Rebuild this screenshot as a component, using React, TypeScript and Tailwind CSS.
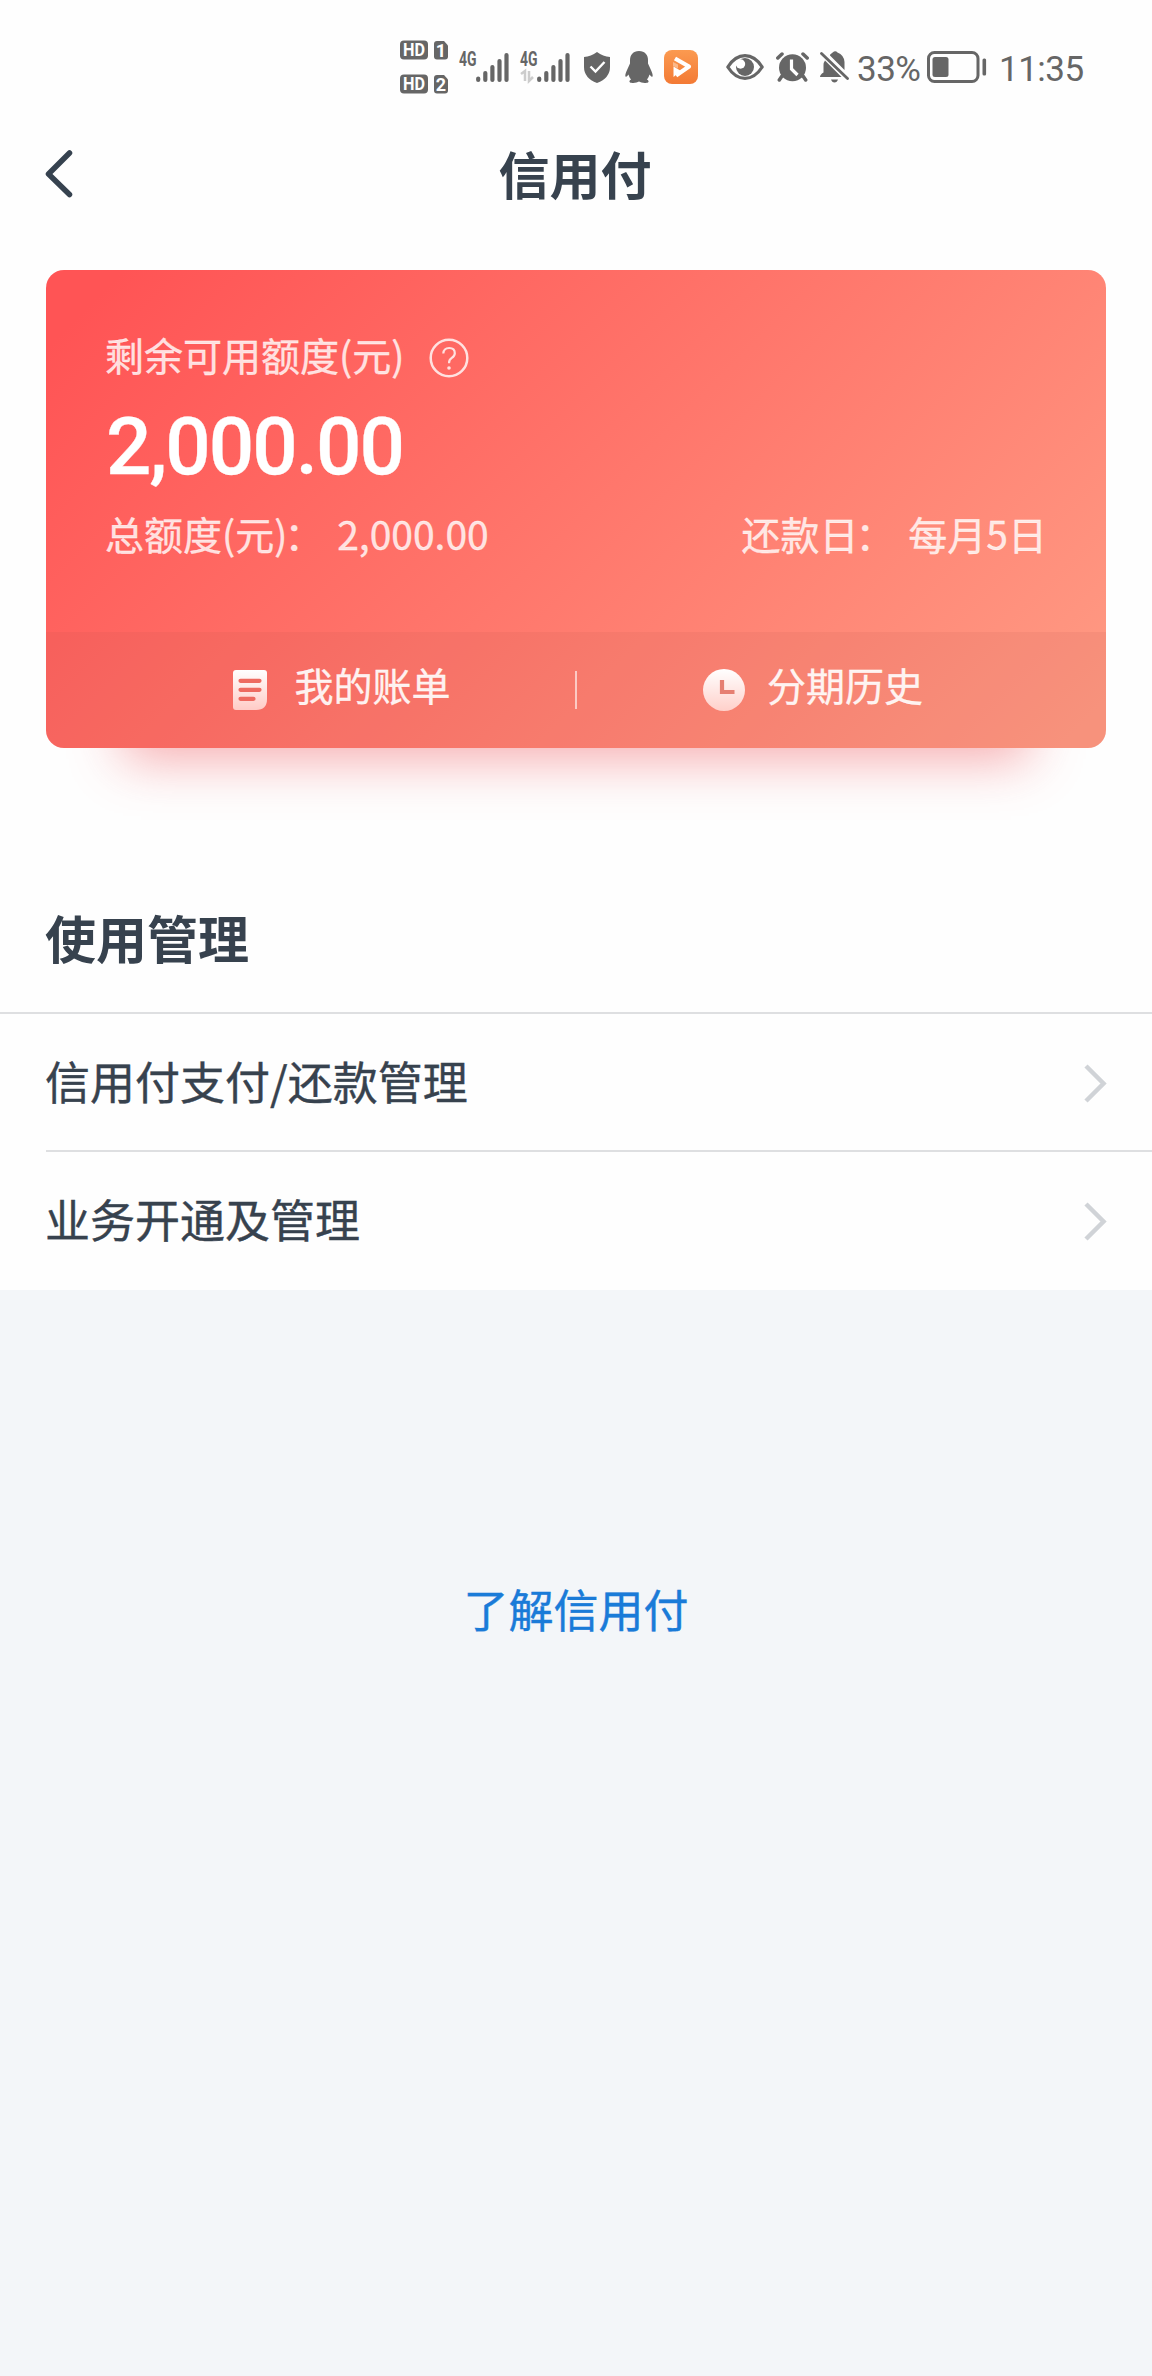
import type { ReactNode } from 'react';

function HdBadge({ sim }: { sim: number }) {
  return (
    <svg className="overflow-visible font-[Roboto]" width="48" height="20" viewBox="0 0 48 20">
      <rect x="0" y="0.5" width="28" height="19" rx="4" fill="#666" />
      <path d="M37 1h7l4 4.500v11q0 3-3 3h-8q-3 0-3-3V4q0-3 3-3z" fill="#666" />
      <text x="14" y="16" textAnchor="middle" textLength="22" lengthAdjust="spacingAndGlyphs" fontSize="18" fontWeight="700" fill="#fff">HD</text>
      <text x="41" y="16.500" textAnchor="middle" fontSize="18" fontWeight="700" fill="#fff">{sim}</text>
    </svg>
  );
}

function Signal({ data = false }: { data?: boolean }) {
  return (
    <svg className="overflow-visible font-[Roboto]" width="50" height="34" viewBox="0 0 50 34">
      <text x="0" y="15.500" textLength="17.500" lengthAdjust="spacingAndGlyphs" fontSize="20" fontWeight="700" fill="#666">4G</text>
      <path d="M19.200 28.500v1.500M26.300 23v7M33.400 17v13M40.500 11v19M47.500 5v25" stroke="#666" strokeWidth="4.200" strokeLinecap="round" />
      {data && <path d="M1 24l4-3v10M9 21v10l4-4" fill="none" stroke="#ccc" strokeWidth="2.500" />}
    </svg>
  );
}

function StatusBar() {
  return (
    <div className="flex h-[134px] items-center pl-[400px] text-[#666]">
      <div className="flex flex-col gap-3.5">
        <HdBadge sim={1} />
        <HdBadge sim={2} />
      </div>
      <Gap className="w-[11px]" />
      <Signal />
      <Gap className="w-[11px]" />
      <Signal data />
      <Gap className="w-3.5" />
      <svg width="26" height="31" viewBox="0 0 26 31">
        <path d="M13 0q6 4.500 13 5v10q0 11-13 16Q0 26 0 15V5q7-.5 13-5z" fill="#666" />
        <path d="M6.500 14.500l5 5 9-9.500" fill="none" stroke="#fff" strokeWidth="2.400" />
      </svg>
      <Gap className="w-[15px]" />
      <svg width="28" height="32" viewBox="0 0 28 32" fill="#666">
        <path d="M14 0C8 0 5 4 5 9v3.500L2.500 18C.5 22 0 24.500.5 25.500c.8.800 2-.5 3-2 .4 1.800 1.400 3.600 2.700 5-2 .7-2.700 3 0 3.300 3 .5 6-.2 7.800-1.200 1.800 1 4.800 1.700 7.800 1.200 2.700-.3 2-2.600 0-3.300 1.300-1.400 2.300-3.200 2.700-5 1 1.500 2.200 2.800 3 2 .5-1 0-3.500-2-7.500L23 12.500V9c0-5-3-9-9-9z" />
      </svg>
      <Gap className="w-[11px]" />
      <svg width="34" height="34" viewBox="0 0 34 34">
        <defs>
          <linearGradient id="player" x1="0" y1="0" x2="0" y2="1">
            <stop stopColor="#fb9a50" />
            <stop offset="1" stopColor="#f37a35" />
          </linearGradient>
        </defs>
        <rect width="34" height="34" rx="8" fill="url(#player)" />
        <path d="M11 8.500l14 8-13 9" fill="none" stroke="#fff" strokeWidth="4.200" strokeLinejoin="round" />
        <path d="M9 12l5 2.500v4L9 16z" fill="#fbb98a" />
        <path d="M9.500 27V16.500l7.500 4.500z" fill="#fff" />
      </svg>
      <Gap className="w-7" />
      <svg width="38" height="26" viewBox="0 0 38 26">
        <path d="M1.800 13Q9 1.700 19 1.700T36.200 13Q29 24.300 19 24.300T1.800 13z" fill="none" stroke="#666" strokeWidth="3.200" strokeLinejoin="round" />
        <circle cx="19" cy="13" r="9" fill="#666" />
        <circle cx="14.500" cy="10" r="4.700" fill="#fff" />
      </svg>
      <Gap className="w-3" />
      <svg width="33" height="30" viewBox="0 0 33 30" fill="none" stroke="#666" strokeWidth="3.500" strokeLinecap="round">
        <path d="M1.800 6L6 2M31.200 6L27 2M6 24l-2.700 4M27 24l2.700 4" />
        <circle cx="16.500" cy="15.800" r="13.500" fill="#666" stroke="none" />
        <path d="M15.500 7.500v9.500l6 6" stroke="#fff" strokeWidth="3.200" strokeLinecap="butt" />
      </svg>
      <Gap className="w-[11px]" />
      <svg width="29" height="32" viewBox="0 0 29 32">
        <path d="M10 3.800Q12 2 14 .5q2-.8 3.500 1Q24 4 24.500 11v8L10 4.500zM5 9.500L21.500 26H0q0-2.500 3.500-4.500V14q0-2.500 1.500-4.500zM11 28.500h7q-1 3-3.500 3t-3.500-3z" fill="#666" />
        <path d="M1.500 2.500l26 25" stroke="#666" strokeWidth="2.800" strokeLinecap="round" />
      </svg>
      <Gap className="w-2" />
      <span className="mt-1 w-[63px] whitespace-nowrap font-[Roboto] text-[35px] leading-none tracking-[-0.5px]">33%</span>
      <Gap className="w-[7px]" />
      <svg width="60" height="32" viewBox="0 0 60 32">
        <rect x="1.500" y="1.500" width="49.500" height="29" rx="6" fill="none" stroke="#666" strokeWidth="3" />
        <rect x="5.500" y="6" width="16" height="20" rx="2.500" fill="#666" />
        <rect x="55.500" y="7.500" width="3.600" height="17" rx="1.500" fill="#666" />
      </svg>
      <Gap className="w-3" />
      <span className="mt-1 whitespace-nowrap font-[Roboto] text-[35px] leading-none tracking-[-0.5px]">11:35</span>
    </div>
  );
}

function Gap({ className }: { className: string }) {
  return <span className={`shrink-0 ${className}`} />;
}

function NavBar() {
  return (
    <header className="grid h-[136px] grid-cols-3 px-[45px] pt-[11px]">
      <svg className="mt-[5px]" width="28" height="48" viewBox="0 0 28 48">
        <path d="M24.500 3L3.500 24l21 20.500" fill="none" stroke="#36424f" strokeWidth="5.500" strokeLinecap="round" strokeLinejoin="round" />
      </svg>
      <h1 className="-ml-0.5 text-center text-[51px] font-bold leading-[56px]">信用付</h1>
    </header>
  );
}

function CardAction({ icon, label, className }: { icon: ReactNode; label: string; className: string }) {
  return (
    <div className={`flex items-center justify-center ${className}`}>
      {icon}
      <span className="-mt-3">{label}</span>
    </div>
  );
}

function LabeledValue({ label, value }: { label: string; value: string }) {
  return (
    <span>
      {label}
      <span className="-ml-[3px] mr-[5px]">：</span> {value}
    </span>
  );
}

function CreditCard() {
  return (
    <section className="mx-[46px] flex h-[478px] flex-col overflow-hidden rounded-[18px] bg-[linear-gradient(135deg,#ff5455_5%,#ff9a83_97%)] text-[39px] leading-[56px] text-white/80 shadow-[0_88px_50px_-77px_rgba(238,80,85,0.48)] [-webkit-text-stroke:0.3px]">
      <div className="h-[362px] px-[59px] pt-[56px]">
        <div className="flex items-center">
          <span>剩余可用额度(元)</span>
          <svg className="ml-[25px] mt-2" width="40" height="40" viewBox="0 0 40 40" fill="none" stroke="#fff" strokeOpacity="0.8" strokeWidth="2.500">
            <circle cx="20" cy="20" r="18.300" />
            <path d="M14.300 15.500q.4-5.500 5.900-5.500 5.600 0 5.600 5.200 0 2.700-3 4.700-2.800 1.800-2.800 5.300" strokeWidth="2.200" />
            <circle cx="20" cy="30" r="1.800" fill="#fff" fillOpacity="0.8" stroke="none" />
          </svg>
        </div>
        <div className="ml-px mt-[23px] h-[84px] whitespace-nowrap font-[Roboto] text-[80px] font-medium leading-[84px] tracking-[-2px] text-white">2,000.00</div>
        <div className="mt-4 flex justify-between">
          <LabeledValue label="总额度(元)" value="2,000.00" />
          <LabeledValue label="还款日" value="每月5日" />
        </div>
      </div>
      <div className="grid flex-1 grid-cols-[1fr_2px_1fr] items-center bg-[#b05040]/10 text-white/90">
        <CardAction
          className="pl-[63px]"
          label="我的账单"
          icon={
            <svg className="mr-[27px]" width="34" height="40" viewBox="0 0 34 40">
              <defs>
                <linearGradient id="bill" x1="0" y1="0" x2="0" y2="1">
                  <stop stopColor="#fff" />
                  <stop offset="1" stopColor="#ffcbc6" />
                </linearGradient>
              </defs>
              <path d="M3 0h28q3 0 3 3v26q0 11-11 11H3q-3 0-3-3V3q0-3 3-3z" fill="url(#bill)" />
              <path d="M7.500 10.800h19M7.500 19.800h19M7.500 28.800h13" stroke="#ee6a60" strokeWidth="4.200" strokeLinecap="round" />
            </svg>
          }
        />
        <span className="h-[38px] bg-white/60" />
        <CardAction
          className="pr-[57px]"
          label="分期历史"
          icon={
            <svg className="mr-[22px]" width="42" height="42" viewBox="0 0 42 42">
              <circle cx="21" cy="21" r="21" fill="url(#clock)" />
              <defs>
                <linearGradient id="clock" x1="0" y1="0" x2="0" y2="1">
                  <stop stopColor="#fff" />
                  <stop offset="1" stopColor="#ffd0ca" />
                </linearGradient>
              </defs>
              <path d="M19 11v12h12.500" fill="none" stroke="#e67f72" strokeWidth="4.200" />
            </svg>
          }
        />
      </div>
    </section>
  );
}

function MenuRow({ label }: { label: string }) {
  return (
    <div className="flex h-[136px] items-center justify-between pr-[45px]">
      <span className="-ml-px -mt-0.5 [-webkit-text-stroke:0.4px]">{label}</span>
      <svg className="mt-0.5" width="23" height="39" viewBox="0 0 23 39">
        <path d="M2 2l17.500 17.500L2 37" fill="none" stroke="#d0d3d7" strokeWidth="4.500" />
      </svg>
    </div>
  );
}

export default function App() {
  return (
    <div className="flex h-[2376px] w-[1152px] flex-col bg-[#f3f6f9] font-['Noto_Sans_CJK_SC',sans-serif] text-[#37424e]">
      <div className="h-[1290px] bg-[#fefefe]">
        <StatusBar />
        <NavBar />
        <CreditCard />
        <h2 className="mt-[153px] h-[111px] px-[45px] text-[51px] font-bold leading-[72px]">使用管理</h2>
        <div className="border-t-2 border-[#dedfe1] pl-[46px] text-[45px]">
          <MenuRow label="信用付支付/还款管理" />
          <div className="border-t-2 border-[#dedfe1]">
            <MenuRow label="业务开通及管理" />
          </div>
        </div>
      </div>
      <a className="mt-[284px] text-center text-[45px] leading-[70px] text-[#1a7bd8] [-webkit-text-stroke:0.4px]">了解信用付</a>
    </div>
  );
}
